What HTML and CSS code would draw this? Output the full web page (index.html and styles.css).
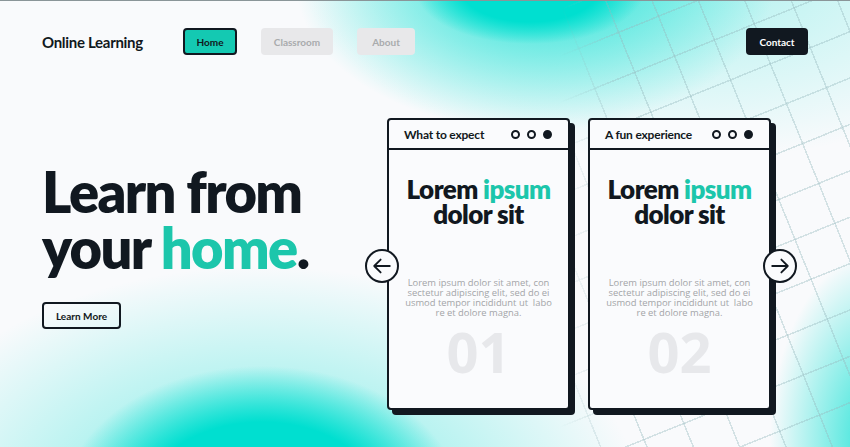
FILE: index.html
```html
<!DOCTYPE html>
<html lang="en">
<head>
<meta charset="utf-8">
<title>Online Learning</title>
<link rel="stylesheet" href="styles.css">
</head>
<body>
<div class="page">
  <div class="decor" aria-hidden="true">
    <div class="grid"><div class="grid-lines"></div></div>
  </div>

  <header class="nav">
    <div class="logo">Online Learning</div>
    <nav class="links">
      <a class="btn btn-active" href="#">Home</a>
      <a class="btn btn-muted" href="#">Classroom</a>
      <a class="btn btn-muted" href="#">About</a>
    </nav>
    <a class="btn btn-dark" href="#">Contact</a>
  </header>

  <main class="hero">
    <section class="intro">
      <h1 class="title">Learn from<br>your <span class="accent">home</span>.</h1>
      <a class="btn btn-outline" href="#">Learn More</a>
    </section>

    <section class="slider">
      <button class="arrow arrow-left" aria-label="Previous">
        <svg viewBox="0 0 24 24" width="22" height="22"><path d="M20.5 12H3.5M10.5 5l-7 7 7 7" fill="none" stroke="#111820" stroke-width="2" stroke-linecap="round" stroke-linejoin="round"/></svg>
      </button>

      <article class="card">
        <div class="card-head">
          <span class="card-title">What to expect</span>
          <span class="dots"><i class="dot"></i><i class="dot"></i><i class="dot dot-fill"></i></span>
        </div>
        <div class="card-body">
          <h2 class="card-heading">Lorem <span class="accent">ipsum</span><br>dolor sit</h2>
          <p class="card-text">Lorem ipsum dolor sit amet, con<br>sectetur adipiscing elit, sed do ei<br>usmod tempor incididunt ut&nbsp; labo<br>re et dolore magna.</p>
          <div class="card-num">01</div>
        </div>
      </article>

      <article class="card">
        <div class="card-head">
          <span class="card-title">A fun experience</span>
          <span class="dots"><i class="dot"></i><i class="dot"></i><i class="dot dot-fill"></i></span>
        </div>
        <div class="card-body">
          <h2 class="card-heading">Lorem <span class="accent">ipsum</span><br>dolor sit</h2>
          <p class="card-text">Lorem ipsum dolor sit amet, con<br>sectetur adipiscing elit, sed do ei<br>usmod tempor incididunt ut&nbsp; labo<br>re et dolore magna.</p>
          <div class="card-num">02</div>
        </div>
      </article>

      <button class="arrow arrow-right" aria-label="Next">
        <svg viewBox="0 0 24 24" width="22" height="22"><path d="M3.5 12h17M13.5 5l7 7-7 7" fill="none" stroke="#111820" stroke-width="2" stroke-linecap="round" stroke-linejoin="round"/></svg>
      </button>
    </section>
  </main>
</div>
</body>
</html>
```

FILE: styles.css
```css
* { box-sizing: border-box; }

html, body {
  margin: 0;
  padding: 0;
}

body {
  width: 850px;
  height: 447px;
  overflow: hidden;
  font-family: Lato, "Noto Sans", sans-serif;
  color: #111820;
}

.page {
  position: relative;
  width: 850px;
  height: 447px;
  overflow: hidden;
  border-top: 1px solid #8a9598;
  background-color: #f9fafc;
  background-image:
    radial-gradient(ellipse 115px 55px at 530px -12px, #00dfd0 0%, #00dfd0 60%, rgba(0, 223, 208, 0) 100%),
    radial-gradient(ellipse 240px 150px at 535px -20px, rgba(0, 223, 208, 0.8) 0%, rgba(0, 223, 208, 0.45) 45%, rgba(0, 223, 208, 0) 100%),
    radial-gradient(ellipse 380px 190px at 680px -30px, rgba(0, 223, 208, 0.3) 0%, rgba(0, 223, 208, 0) 100%),
    radial-gradient(ellipse 200px 140px at 262px 505px, #00dfd0 0%, #00dfd0 60%, rgba(0, 223, 208, 0) 100%),
    radial-gradient(ellipse 380px 240px at 262px 505px, rgba(0, 223, 208, 0.6) 0%, rgba(0, 223, 208, 0.25) 55%, rgba(0, 223, 208, 0) 100%),
    radial-gradient(ellipse 110px 190px at 880px 440px, rgba(0, 223, 208, 0.85) 0%, rgba(0, 223, 208, 0) 100%);
}

/* decorative background grid */
.decor {
  position: absolute;
  inset: 0;
  pointer-events: none;
}

.grid {
  position: absolute;
  top: 0;
  right: 0;
  width: 290px;
  height: 447px;
  overflow: hidden;
  -webkit-mask-image: linear-gradient(to right, transparent 0%, #000 20%);
  mask-image: linear-gradient(to right, transparent 0%, #000 20%);
}

.grid-lines {
  position: absolute;
  left: -250px;
  top: -250px;
  width: 800px;
  height: 950px;
  transform: rotate(-22deg);
  background-image:
    repeating-linear-gradient(0deg, rgba(150, 185, 190, 0.38) 0 1.5px, transparent 1.5px 43px),
    repeating-linear-gradient(90deg, rgba(150, 185, 190, 0.38) 0 1.5px, transparent 1.5px 43px);
}

/* nav */
.nav {
  position: relative;
  display: flex;
  align-items: center;
  padding: 27px 42px 0 42px;
  height: 54px;
}

.logo {
  font-size: 15px;
  font-weight: 700;
  letter-spacing: -0.3px;
  margin-right: 39px;
  width: 102px;
  white-space: nowrap;
}

.links {
  display: flex;
  gap: 24px;
  flex: 1;
}

.btn {
  display: inline-flex;
  align-items: center;
  justify-content: center;
  height: 27px;
  border-radius: 4px;
  font-size: 10px;
  font-weight: 700;
  text-decoration: none;
  color: #111820;
}

.btn-active {
  width: 54px;
  background: #14c9b2;
  border: 2px solid #111820;
}

.btn-muted {
  background: #e8e8ea;
  color: #a9abad;
}

.links .btn-muted:nth-child(2) { width: 72px; }
.links .btn-muted:nth-child(3) { width: 58px; }

.btn-dark {
  width: 62px;
  background: #111820;
  color: #ffffff;
}

.btn-outline {
  width: 79px;
  height: 27px;
  border: 2px solid #111820;
  background: transparent;
}

/* hero */
.hero {
  position: relative;
  display: flex;
  padding: 0 0 0 42px;
}

.intro {
  width: 325px;
  padding-top: 109px;
}

.title {
  margin: 0 0 26px 0;
  font-size: 56px;
  line-height: 56px;
  font-weight: 800;
  letter-spacing: -1.6px;
}

.accent { color: #1cc6ab; }

.slider {
  position: relative;
  display: flex;
  gap: 18px;
  margin-top: 63px;
  margin-left: 20px;
}

.card {
  width: 183px;
  height: 292px;
  background: #fafbfd;
  border: 2px solid #111820;
  border-radius: 4px;
  box-shadow: 5px 5px 0 0 #111820;
  display: flex;
  flex-direction: column;
}

.card-head {
  height: 30px;
  border-bottom: 2px solid #111820;
  display: flex;
  align-items: center;
  justify-content: space-between;
  padding: 0 16px 0 15px;
}

.card-title {
  font-size: 12px;
  font-weight: 700;
  letter-spacing: -0.2px;
}

.dots {
  display: flex;
  gap: 7px;
}

.dot {
  width: 9px;
  height: 9px;
  border: 2px solid #111820;
  border-radius: 50%;
}

.dot-fill { background: #111820; }

.card-body {
  display: flex;
  flex-direction: column;
  align-items: center;
  text-align: center;
}

.card-heading {
  margin: 27px 0 0 0;
  font-size: 26px;
  line-height: 25px;
  font-weight: 800;
  letter-spacing: -0.6px;
}

.card-text {
  margin: 51px 0 0 0;
  font-family: "Open Sans", sans-serif;
  font-size: 9.4px;
  line-height: 10px;
  color: #a3a5a8;
}

.card-num {
  margin-top: 5px;
  font-family: "Open Sans", sans-serif;
  font-size: 56px;
  line-height: 56px;
  font-weight: 700;
  color: #e7e8eb;
}

.arrow {
  position: absolute;
  top: 131px;
  width: 34px;
  height: 34px;
  padding: 0;
  border: 2px solid #111820;
  border-radius: 50%;
  background: #fafbfd;
  display: flex;
  align-items: center;
  justify-content: center;
}

.arrow-left { left: -22px; }
.arrow-right { right: -26px; }
```
